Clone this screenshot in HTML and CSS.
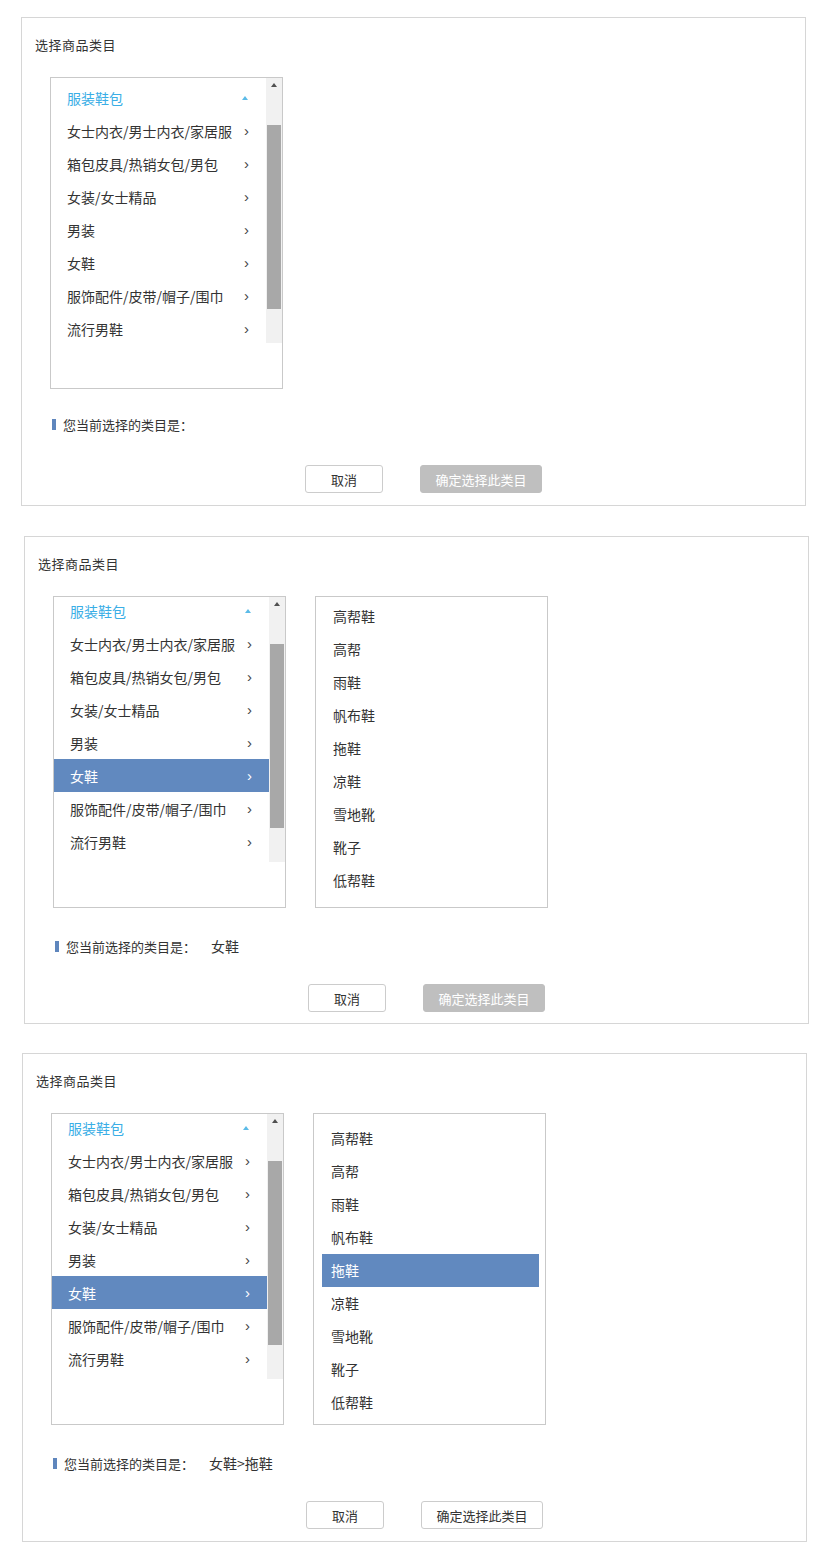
FILE: index.html
```html
<!DOCTYPE html>
<html lang="zh-CN">
<head>
<meta charset="utf-8">
<title>选择商品类目</title>
<link rel="stylesheet" href="styles.css">
</head>
<body>
<div class="page">

  <section class="panel panel-1">
    <div class="title">选择商品类目</div>
    <div class="lists">
      <div class="box cat">
        <div class="viewport">
          <ul class="items items-top">
            <li class="item item-open"><span class="name">服装鞋包</span><span class="arrow"><i class="tri-up"></i></span></li>
            <li class="item"><span class="name">女士内衣/男士内衣/家居服</span><span class="arrow">›</span></li>
            <li class="item"><span class="name">箱包皮具/热销女包/男包</span><span class="arrow">›</span></li>
            <li class="item"><span class="name">女装/女士精品</span><span class="arrow">›</span></li>
            <li class="item"><span class="name">男装</span><span class="arrow">›</span></li>
            <li class="item"><span class="name">女鞋</span><span class="arrow">›</span></li>
            <li class="item"><span class="name">服饰配件/皮带/帽子/围巾</span><span class="arrow">›</span></li>
            <li class="item"><span class="name">流行男鞋</span><span class="arrow">›</span></li>
          </ul>
          <div class="scrollbar"><div class="sb-up"><i class="sb-tri"></i></div><div class="sb-thumb"></div></div>
        </div>
      </div>
    </div>
    <div class="current"><span class="mark"></span>您当前选择的类目是：</div>
    <div class="actions">
      <button class="btn btn-cancel">取消</button>
      <button class="btn btn-disabled">确定选择此类目</button>
    </div>
  </section>

  <section class="panel panel-2">
    <div class="title">选择商品类目</div>
    <div class="lists">
      <div class="box cat">
        <div class="viewport">
          <ul class="items">
            <li class="item item-open"><span class="name">服装鞋包</span><span class="arrow"><i class="tri-up"></i></span></li>
            <li class="item"><span class="name">女士内衣/男士内衣/家居服</span><span class="arrow">›</span></li>
            <li class="item"><span class="name">箱包皮具/热销女包/男包</span><span class="arrow">›</span></li>
            <li class="item"><span class="name">女装/女士精品</span><span class="arrow">›</span></li>
            <li class="item"><span class="name">男装</span><span class="arrow">›</span></li>
            <li class="item item-active"><span class="name">女鞋</span><span class="arrow">›</span></li>
            <li class="item"><span class="name">服饰配件/皮带/帽子/围巾</span><span class="arrow">›</span></li>
            <li class="item"><span class="name">流行男鞋</span><span class="arrow">›</span></li>
          </ul>
          <div class="scrollbar"><div class="sb-up"><i class="sb-tri"></i></div><div class="sb-thumb"></div></div>
        </div>
      </div>
      <div class="box sub">
        <ul class="sub-items">
          <li class="sub-item">高帮鞋</li>
          <li class="sub-item">高帮</li>
          <li class="sub-item">雨鞋</li>
          <li class="sub-item">帆布鞋</li>
          <li class="sub-item">拖鞋</li>
          <li class="sub-item">凉鞋</li>
          <li class="sub-item">雪地靴</li>
          <li class="sub-item">靴子</li>
          <li class="sub-item">低帮鞋</li>
        </ul>
      </div>
    </div>
    <div class="current"><span class="mark"></span>您当前选择的类目是：<span class="value">女鞋</span></div>
    <div class="actions">
      <button class="btn btn-cancel">取消</button>
      <button class="btn btn-disabled">确定选择此类目</button>
    </div>
  </section>

  <section class="panel panel-3">
    <div class="title">选择商品类目</div>
    <div class="lists">
      <div class="box cat">
        <div class="viewport">
          <ul class="items">
            <li class="item item-open"><span class="name">服装鞋包</span><span class="arrow"><i class="tri-up"></i></span></li>
            <li class="item"><span class="name">女士内衣/男士内衣/家居服</span><span class="arrow">›</span></li>
            <li class="item"><span class="name">箱包皮具/热销女包/男包</span><span class="arrow">›</span></li>
            <li class="item"><span class="name">女装/女士精品</span><span class="arrow">›</span></li>
            <li class="item"><span class="name">男装</span><span class="arrow">›</span></li>
            <li class="item item-active"><span class="name">女鞋</span><span class="arrow">›</span></li>
            <li class="item"><span class="name">服饰配件/皮带/帽子/围巾</span><span class="arrow">›</span></li>
            <li class="item"><span class="name">流行男鞋</span><span class="arrow">›</span></li>
          </ul>
          <div class="scrollbar"><div class="sb-up"><i class="sb-tri"></i></div><div class="sb-thumb"></div></div>
        </div>
      </div>
      <div class="box sub">
        <ul class="sub-items">
          <li class="sub-item">高帮鞋</li>
          <li class="sub-item">高帮</li>
          <li class="sub-item">雨鞋</li>
          <li class="sub-item">帆布鞋</li>
          <li class="sub-item sub-item-active">拖鞋</li>
          <li class="sub-item">凉鞋</li>
          <li class="sub-item">雪地靴</li>
          <li class="sub-item">靴子</li>
          <li class="sub-item">低帮鞋</li>
        </ul>
      </div>
    </div>
    <div class="current"><span class="mark"></span>您当前选择的类目是：<span class="value">女鞋&gt;拖鞋</span></div>
    <div class="actions">
      <button class="btn btn-cancel">取消</button>
      <button class="btn btn-primary">确定选择此类目</button>
    </div>
  </section>

</div>
</body>
</html>
```

FILE: styles.css
```css
* { box-sizing: border-box; }

html, body {
  margin: 0;
  padding: 0;
  background: #ffffff;
}

body {
  font-family: "Noto Sans CJK SC", "Microsoft YaHei", sans-serif;
  color: #333333;
}

.page {
  padding-top: 17px;
}

.panel {
  width: 785px;
  height: 489px;
  border: 1px solid #d6d6d6;
  background: #ffffff;
  padding: 17px 0 0 0;
  display: flex;
  flex-direction: column;
}

.panel-1 { margin: 0 0 30px 21px; }
.panel-2 { margin: 0 0 29px 24px; height: 488px; }
.panel-3 { margin: 0 0 0 22px; }

.title {
  font-size: 13px;
  line-height: 20px;
  height: 20px;
  padding-left: 13px;
  letter-spacing: 0.5px;
  color: #333333;
}

.lists {
  display: flex;
  gap: 29px;
  margin-top: 22px;
  padding-left: 28px;
}

.box {
  width: 233px;
  height: 312px;
  border: 1px solid #c9c9c9;
  background: #ffffff;
}

.viewport {
  display: flex;
  height: 265px;
  overflow: hidden;
}

.items {
  list-style: none;
  margin: -3px 0 0 0;
  padding: 0;
  flex: 1;
}

.items-top {
  margin-top: 3px;
}

.item {
  display: flex;
  align-items: center;
  height: 33px;
  padding-left: 16px;
  font-size: 14px;
  color: #333333;
  white-space: nowrap;
}

.item .name { flex: 1; }

.item .arrow {
  width: 22px;
  font-family: "Liberation Sans", Arial, sans-serif;
  font-size: 15px;
  color: #444444;
  display: flex;
  align-items: center;
}

.item-open { color: #3aaee6; }

.tri-up {
  display: block;
  width: 0;
  height: 0;
  margin-left: -2px;
  border-left: 3px solid transparent;
  border-right: 3px solid transparent;
  border-bottom: 4px solid #5bbbe8;
}

.item-active {
  background: #6189bf;
  color: #ffffff;
}

.item-active .arrow { color: #ffffff; }

.scrollbar {
  width: 16px;
  height: 265px;
  background: #f1f1f1;
  display: flex;
  flex-direction: column;
}

.sb-up {
  height: 16px;
  display: flex;
  justify-content: center;
  padding-top: 5px;
}

.sb-tri {
  display: block;
  width: 0;
  height: 0;
  border-left: 3.5px solid transparent;
  border-right: 3.5px solid transparent;
  border-bottom: 4px solid #505050;
}

.sb-thumb {
  margin: 31px 1px 0 1px;
  height: 184px;
  background: #a8a8a8;
}

.sub-items {
  list-style: none;
  margin: 0;
  padding: 3px 6px 0 8px;
}

.panel-3 .sub-items {
  padding-top: 8px;
}

.sub-item {
  height: 33px;
  line-height: 33px;
  padding-left: 9px;
  font-size: 14px;
  color: #333333;
}

.sub-item-active {
  background: #6189bf;
  color: #ffffff;
}

.current {
  display: flex;
  align-items: center;
  height: 20px;
  margin-top: 28px;
  padding-left: 30px;
  font-size: 13px;
  color: #333333;
}

.panel-1 .current {
  margin-top: 25px;
}

.panel-1 .actions {
  margin-top: 31px;
}

.mark {
  display: inline-block;
  width: 4px;
  height: 11px;
  background: #5f86bd;
  margin-right: 7px;
}

.value {
  margin-left: 15px;
  font-size: 14px;
}

.actions {
  display: flex;
  gap: 37px;
  margin-top: 28px;
  padding-left: 283px;
}

.btn {
  height: 28px;
  border-radius: 3px;
  font-family: "Noto Sans CJK SC", sans-serif;
  font-size: 13px;
  padding: 0;
  cursor: pointer;
}

.btn-cancel {
  width: 78px;
  background: #ffffff;
  border: 1px solid #cccccc;
  color: #333333;
}

.btn-disabled {
  width: 122px;
  background: #bfbfbf;
  border: 1px solid #bfbfbf;
  color: #ffffff;
}

.btn-primary {
  width: 122px;
  background: #ffffff;
  border: 1px solid #cccccc;
  color: #333333;
}
```
